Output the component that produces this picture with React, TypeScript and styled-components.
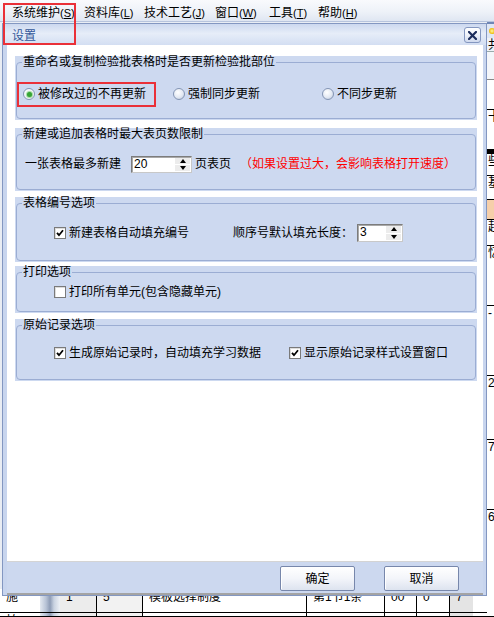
import React from 'react';
import styled, { createGlobalStyle } from 'styled-components';

const GlobalStyle = createGlobalStyle`
  html, body {
    margin: 0;
    padding: 0;
    background: #fff;
  }
  body {
    font-family: "Liberation Sans", "Noto Sans CJK SC", sans-serif;
    font-size: 12px;
    color: #000;
  }
  *, *::before, *::after {
    box-sizing: border-box;
  }
`;

const Screen = styled.div`
  position: relative;
  width: 494px;
  height: 617px;
  overflow: hidden;
  display: flex;
  flex-direction: column;
  background: #fff;
`;

const MenuBar = styled.div`
  height: 22px;
  flex: none;
  display: flex;
  align-items: flex-start;
  padding: 6px 0 0 12px;
  background: linear-gradient(#f9fafd, #eef2f8 55%, #dfe6f2);
  border-bottom: 1px solid #b7c4dd;
`;

const MenuItem = styled.span<{ $w?: number }>`
  width: ${p => (p.$w ? `${p.$w}px` : 'auto')};
  line-height: 14px;
  white-space: nowrap;
`;

const Shortcut = styled.span`
  font-size: 11px;
`;

const Workspace = styled.div`
  flex: 1;
  display: flex;
  min-height: 0;
`;

const MainArea = styled.div`
  flex: 1;
  display: flex;
  flex-direction: column;
  background: #e9edf4;
`;

const Spacer = styled.div`
  flex: 1;
`;

const TableStrip = styled.div`
  height: 28px;
  flex: none;
  display: flex;
  flex-direction: column;
  background: #fff;
`;

const TableRow = styled.div<{ $h: number }>`
  height: ${p => p.$h}px;
  display: flex;
  border-bottom: 1px solid #000;
`;

const Cell = styled.div<{ $w: number; $bg?: string; $line?: string }>`
  width: ${p => p.$w}px;
  flex: none;
  background: ${p => p.$bg || '#fff'};
  border-right: 1px solid ${p => p.$line || '#000'};
  padding: 1px 0 0 6px;
  line-height: 14px;
  white-space: nowrap;
  overflow: hidden;
`;

const Splitter = styled.div`
  width: 20px;
  flex: none;
  background: linear-gradient(90deg, #e3e8f0, #b8c3d6 30%, #8e9cb6 50%, #c9d2e1 70%, #eef1f6);
`;

const SideStrip = styled.div`
  width: 7px;
  flex: none;
  display: flex;
  flex-direction: column;
  overflow: hidden;
  background: #fff;
`;

const SideCell = styled.div<{ $h: number; $bg?: string; $line?: string }>`
  height: ${p => p.$h}px;
  flex: none;
  background: ${p => p.$bg || '#fff'};
  border-bottom: 1px solid ${p => p.$line || 'transparent'};
  line-height: 14px;
  padding-left: 1px;
  white-space: nowrap;
  overflow: hidden;
`;

const StarIcon = styled.span`
  display: block;
  width: 6px;
  height: 6px;
  margin: 4px 0 0 1px;
  border-radius: 50%;
  background: radial-gradient(circle, #fff7a0, #f2c21b 60%, #c98a00);
`;

const Dialog = styled.div`
  position: absolute;
  left: 2px;
  top: 23px;
  width: 485px;
  height: 573px;
  display: flex;
  flex-direction: column;
  border: 1px solid #8397c1;
  background: #c8d5ee;
  padding: 0 3px 0 4px;
`;

const TitleBar = styled.div`
  height: 21px;
  flex: none;
  margin: 0 -3px 0 -4px;
  padding: 1px 5px 0 9px;
  display: flex;
  align-items: center;
  justify-content: space-between;
  background: linear-gradient(#ccd8ef, #e6edf8 45%, #d3def2);
`;

const Title = styled.span`
  color: #34589a;
  line-height: 14px;
  padding-top: 2px;
`;

const CloseButton = styled.div`
  width: 17px;
  height: 16px;
  display: flex;
  align-items: center;
  justify-content: center;
  border: 1px solid #8497c0;
  border-radius: 3px;
  background: linear-gradient(#ffffff, #eef2fa 50%, #cfd9ee);
`;

const Body = styled.div`
  flex: 1;
  min-height: 0;
  background: #fff;
  padding: 11px 6px 0 8px;
  display: flex;
  flex-direction: column;
`;

const Panel = styled.div<{ $gap: number }>`
  margin-top: ${p => p.$gap}px;
  background: #cdd9f0;
  padding: 0 1px 1px 1px;
`;

const Group = styled.fieldset<{ $h: number }>`
  height: ${p => p.$h}px;
  margin: 0;
  padding: 0;
  min-width: 0;
  border: 1px solid #9badd3;
  border-radius: 4px;
`;

const Legend = styled.legend`
  margin-left: 5px;
  padding: 0 1px;
  font-size: 12px;
  line-height: 12px;
  white-space: nowrap;
`;

const Row = styled.div<{ $top: number; $left: number }>`
  display: flex;
  align-items: center;
  height: 16px;
  margin-top: ${p => p.$top}px;
  padding-left: ${p => p.$left}px;
  white-space: nowrap;
  line-height: 14px;
`;

const Choice = styled.label<{ $w?: number }>`
  display: flex;
  align-items: center;
  flex: none;
  width: ${p => (p.$w ? `${p.$w}px` : 'auto')};
`;

const RadioMark = styled.span<{ $on?: boolean }>`
  width: 12px;
  height: 12px;
  flex: none;
  margin-right: 3px;
  border-radius: 50%;
  border: 1px solid #8495b4;
  display: flex;
  align-items: center;
  justify-content: center;
  background: ${p =>
    p.$on
      ? 'radial-gradient(circle at 45% 40%, #ffffff, #f1f4f9 70%, #d9e0ec)'
      : 'radial-gradient(circle at 40% 35%, #ffffff, #e3e9f3 55%, #b5c1d7)'};

  &::after {
    content: '';
    display: ${p => (p.$on ? 'block' : 'none')};
    width: 5px;
    height: 5px;
    border-radius: 50%;
    background: #36a436;
    box-shadow: 0 0 1px 1px #9ad79a;
  }
`;

const CheckMark = styled.span`
  width: 12px;
  height: 12px;
  flex: none;
  margin-right: 3px;
  border: 1px solid #7a7a7a;
  background: #fff;
  box-shadow: inset 1px 1px 0 #dcdcdc;
  display: flex;
  align-items: center;
  justify-content: center;
`;

const Text = styled.span<{ $gap?: number; $red?: boolean }>`
  margin-left: ${p => p.$gap || 0}px;
  color: ${p => (p.$red ? '#ff0000' : '#000')};
`;

const Spin = styled.div<{ $w: number; $h: number; $gap: number }>`
  width: ${p => p.$w}px;
  height: ${p => p.$h}px;
  flex: none;
  margin-left: ${p => p.$gap}px;
  display: flex;
  background: #fff;
  border: 1px solid;
  border-color: #7c7c7c #c8c8c8 #c8c8c8 #7c7c7c;
  box-shadow: inset 1px 1px 0 #a9a9a9;
`;

const SpinValue = styled.span`
  flex: 1;
  padding: 0 0 0 2px;
  font-family: "Liberation Sans", sans-serif;
  line-height: 15px;
`;

const SpinButtons = styled.div`
  width: 16px;
  display: flex;
  flex-direction: column;
  gap: 1px;
  padding: 1px 1px 1px 0;
`;

const SpinButton = styled.div`
  flex: 1;
  display: flex;
  align-items: center;
  justify-content: center;
  background: #ececec;
`;

const Arrow = styled.span<{ $up?: boolean }>`
  width: 0;
  height: 0;
  border-left: 3px solid transparent;
  border-right: 3px solid transparent;
  ${p => (p.$up ? 'border-bottom: 4px solid #000;' : 'border-top: 4px solid #000;')}
`;

const Footer = styled.div`
  height: 34px;
  flex: none;
  display: flex;
  justify-content: flex-end;
  align-items: flex-start;
  gap: 29px;
  padding: 4px 24px 0 0;
  background: #ccd8ef;
  border-top: 1px solid #d4d4d4;
  border-bottom: 2px solid #a4a4a4;
`;

const Button = styled.button`
  width: 75px;
  height: 25px;
  padding: 0;
  font-family: inherit;
  font-size: 12px;
  line-height: 14px;
  color: #000;
  border: 1px solid #7787ab;
  border-radius: 2px;
  background: linear-gradient(#ffffff, #f3f5fa 50%, #dde3ef);
  box-shadow: inset 1px 1px 0 #fff;
`;

const Highlight = styled.div<{ $x: number; $y: number; $w: number; $h: number }>`
  position: absolute;
  left: ${p => p.$x}px;
  top: ${p => p.$y}px;
  width: ${p => p.$w}px;
  height: ${p => p.$h}px;
  border: 2px solid #ea3038;
  pointer-events: none;
`;

const Radio = ({ on, w, children }: { on?: boolean; w?: number; children: React.ReactNode }) => (
  <Choice $w={w}>
    <RadioMark $on={on} />
    {children}
  </Choice>
);

const Check = ({ on, w, children }: { on?: boolean; w?: number; children: React.ReactNode }) => (
  <Choice $w={w}>
    <CheckMark>
      {on && (
        <svg width="8" height="8" viewBox="0 0 8 8">
          <path d="M1 3.8 L3 6.2 L7 1.3" fill="none" stroke="#000" strokeWidth="1.8" />
        </svg>
      )}
    </CheckMark>
    {children}
  </Choice>
);

const SpinBox = ({ value, w, h, gap }: { value: string; w: number; h: number; gap: number }) => (
  <Spin $w={w} $h={h} $gap={gap}>
    <SpinValue>{value}</SpinValue>
    <SpinButtons>
      <SpinButton>
        <Arrow $up />
      </SpinButton>
      <SpinButton>
        <Arrow />
      </SpinButton>
    </SpinButtons>
  </Spin>
);

const menus = [
  { label: '系统维护', key: 'S', w: 72 },
  { label: '资料库', key: 'L', w: 60 },
  { label: '技术工艺', key: 'J', w: 71 },
  { label: '窗口', key: 'W', w: 54 },
  { label: '工具', key: 'T', w: 49 },
  { label: '帮助', key: 'H' },
];

const sideCells = [
  { h: 2, bg: '#6f86b6' },
  { h: 14, bg: '#dfe7f5', star: true },
  { h: 14, bg: '#eef2f8', text: '共', line: '#9aa' },
  { h: 28, bg: '#f4f6fa', line: '#888' },
  { h: 30, bg: '#fff', line: '#000' },
  { h: 40, bg: '#fff', text: '十', line: '#000' },
  { h: 4, bg: '#000' },
  { h: 22, bg: '#fff', text: '些', line: '#000' },
  { h: 24, bg: '#fff', text: '基', line: '#000' },
  { h: 20, bg: '#f6cfaa', line: '#000' },
  { h: 26, bg: '#fff', text: '起', line: '#000' },
  { h: 60, bg: '#fff', text: '忆', line: '#000' },
  { h: 70, bg: '#fff', text: '-', line: '#000' },
  { h: 64, bg: '#fff', text: '2', line: '#000' },
  { h: 70, bg: '#fff', text: '7', line: '#000' },
  { h: 107, bg: '#fff', text: '6', line: '#000' },
];

export default function App() {
  return (
    <Screen>
      <GlobalStyle />
      <MenuBar>
        {menus.map(m => (
          <MenuItem key={m.key} $w={m.w}>
            {m.label}
            <Shortcut>
              (<u>{m.key}</u>)
            </Shortcut>
          </MenuItem>
        ))}
      </MenuBar>

      <Workspace>
        <MainArea>
          <Spacer />
          <TableStrip>
            <TableRow $h={24}>
              <Cell $w={40} $line="#fff">施</Cell>
              <Splitter />
              <Cell $w={37} $bg="#ececec" $line="#000">1</Cell>
              <Cell $w={46} $bg="#f2f2f2">5</Cell>
              <Cell $w={164}>模板选择制度</Cell>
              <Cell $w={78}>第1节1条</Cell>
              <Cell $w={32}>00</Cell>
              <Cell $w={33}>0</Cell>
              <Cell $w={23} $bg="#e4e4e4" $line="#e4e4e4">7</Cell>
              <Cell $w={14} $line="#fff" />
            </TableRow>
            <TableRow $h={4}>
              <Cell $w={40} $line="#fff">拍</Cell>
              <Splitter />
              <Cell $w={37} $bg="#ececec" />
              <Cell $w={46} $bg="#f2f2f2" />
              <Cell $w={164} />
              <Cell $w={78} />
              <Cell $w={32} />
              <Cell $w={33} />
              <Cell $w={23} $bg="#e4e4e4" $line="#e4e4e4" />
            </TableRow>
          </TableStrip>
        </MainArea>
        <SideStrip>
          {sideCells.map((c, i) => (
            <SideCell key={i} $h={c.h} $bg={c.bg} $line={c.line}>
              {c.star ? <StarIcon /> : c.text}
            </SideCell>
          ))}
        </SideStrip>
      </Workspace>

      <Dialog>
        <TitleBar>
          <Title>设置</Title>
          <CloseButton>
            <svg width="9" height="9" viewBox="0 0 9 9">
              <path d="M1 1 L8 8 M8 1 L1 8" stroke="#1c2d5c" strokeWidth="2.2" strokeLinecap="square" />
            </svg>
          </CloseButton>
        </TitleBar>

        <Body>
          <Panel $gap={0}>
            <Group $h={63}>
              <Legend>重命名或复制检验批表格时是否更新检验批部位</Legend>
              <Row $top={18} $left={6}>
                <Radio on w={150}>被修改过的不再更新</Radio>
                <Radio w={149}>强制同步更新</Radio>
                <Radio>不同步更新</Radio>
              </Row>
            </Group>
          </Panel>

          <Panel $gap={8}>
            <Group $h={62}>
              <Legend>新建或追加表格时最大表页数限制</Legend>
              <Row $top={16} $left={8}>
                <Text>一张表格最多新建</Text>
                <SpinBox value="20" w={61} h={17} gap={10} />
                <Text $gap={3}>页表页</Text>
                <Text $gap={9} $red>（如果设置过大，会影响表格打开速度）</Text>
              </Row>
            </Group>
          </Panel>

          <Panel $gap={6}>
            <Group $h={64}>
              <Legend>表格编号选项</Legend>
              <Row $top={16} $left={37}>
                <Check on w={179}>新建表格自动填充编号</Check>
                <Text>顺序号默认填充长度：</Text>
                <SpinBox value="3" w={46} h={18} gap={4} />
              </Row>
            </Group>
          </Panel>

          <Panel $gap={4}>
            <Group $h={46}>
              <Legend>打印选项</Legend>
              <Row $top={6} $left={37}>
                <Check>打印所有单元(包含隐藏单元)</Check>
              </Row>
            </Group>
          </Panel>

          <Panel $gap={6}>
            <Group $h={61}>
              <Legend>原始记录选项</Legend>
              <Row $top={14} $left={37}>
                <Check on w={235}>生成原始记录时，自动填充学习数据</Check>
                <Check on>显示原始记录样式设置窗口</Check>
              </Row>
            </Group>
          </Panel>
        </Body>

        <Footer>
          <Button>确定</Button>
          <Button>取消</Button>
        </Footer>
      </Dialog>

      <Highlight $x={3} $y={3} $w={73} $h={42} />
      <Highlight $x={17} $y={82} $w={139} $h={25} />
    </Screen>
  );
}
